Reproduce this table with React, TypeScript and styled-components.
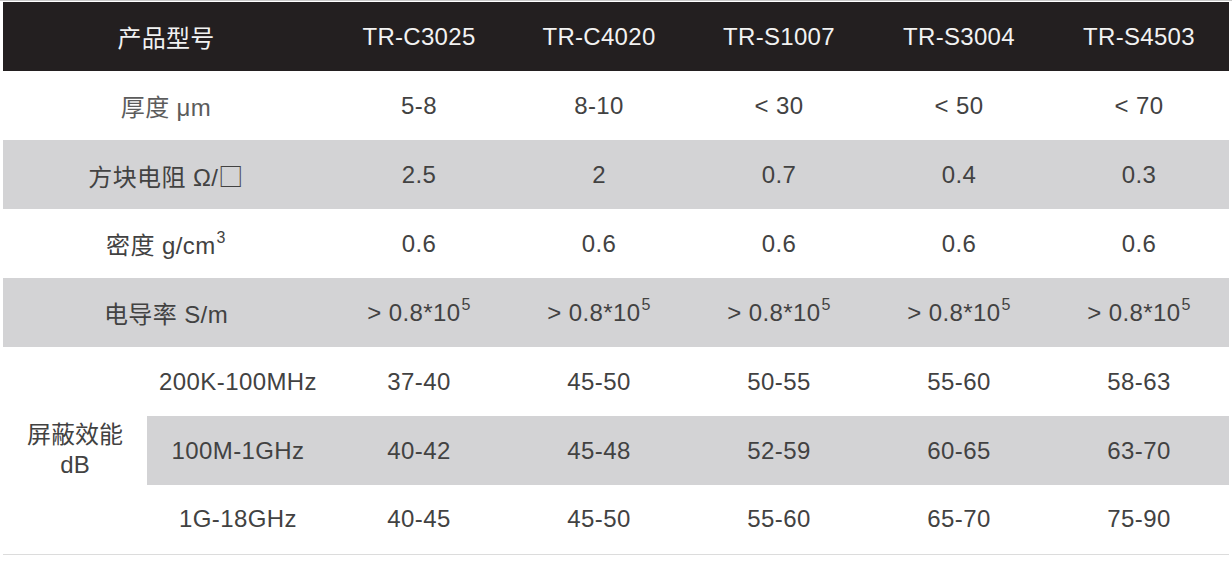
import React from 'react';
import styled, { createGlobalStyle } from 'styled-components';

const GlobalStyle = createGlobalStyle`
  html, body {
    margin: 0;
    padding: 0;
    background: #ffffff;
  }
  body {
    font-family: "Liberation Sans", "Noto Sans CJK SC", sans-serif;
  }
`;

const Page = styled.div`
  width: 1232px;
  height: 570px;
  padding: 1px 3px 0;
  box-sizing: border-box;
  border-top: 1px solid #c8c8c8;
  background: #ffffff;
`;

const SpecTable = styled.table`
  width: 1226px;
  table-layout: fixed;
  border-collapse: collapse;
  border-bottom: 1px solid #dcdcdc;
  font-size: 24px;
  color: #424242;
`;

const HeadRow = styled.tr`
  background: #231f20;
  height: 69px;
`;

const HeadCell = styled.th`
  color: #f2f2f2;
  font-weight: normal;
  text-align: center;
  vertical-align: middle;
  padding: 0;
  letter-spacing: 0.3px;
`;

const Row = styled.tr<{ $shade?: boolean }>`
  height: 69px;
  background: ${(p) => (p.$shade ? '#d3d3d5' : '#ffffff')};
`;

const Cell = styled.td<{ $muted?: boolean; $shade?: boolean }>`
  text-align: center;
  vertical-align: middle;
  padding: 0;
  color: ${(p) => (p.$muted ? '#5c5c5c' : '#424242')};
  background: ${(p) => (p.$shade ? '#d3d3d5' : 'transparent')};
  white-space: nowrap;
  letter-spacing: 0.4px;
`;

const GroupCell = styled.td`
  text-align: center;
  vertical-align: middle;
  padding: 0;
  background: #ffffff;
  line-height: 30px;
  color: #424242;
`;

const Sup = styled.sup`
  font-size: 16px;
  line-height: 0;
  position: relative;
  top: -2px;
  vertical-align: super;
  margin-left: 1px;
`;

const Square = styled.span`
  font-family: "Noto Sans CJK SC", sans-serif;
  font-size: 25px;
`;

const models = ['TR-C3025', 'TR-C4020', 'TR-S1007', 'TR-S3004', 'TR-S4503'];

type SpecRow = { label: React.ReactNode; values: React.ReactNode[]; shade?: boolean; muted?: boolean };

const conductivity = (
  <>
    &gt; 0.8*10<Sup>5</Sup>
  </>
);

const specRows: SpecRow[] = [
  { label: '厚度 μm', values: ['5-8', '8-10', '< 30', '< 50', '< 70'], muted: true },
  {
    label: (
      <>
        方块电阻 Ω/<Square>□</Square>
      </>
    ),
    values: ['2.5', '2', '0.7', '0.4', '0.3'],
    shade: true,
  },
  {
    label: (
      <>
        密度 g/cm<Sup>3</Sup>
      </>
    ),
    values: ['0.6', '0.6', '0.6', '0.6', '0.6'],
  },
  { label: '电导率 S/m', values: Array(5).fill(conductivity), shade: true },
];

const shielding = [
  { band: '200K-100MHz', values: ['37-40', '45-50', '50-55', '55-60', '58-63'] },
  { band: '100M-1GHz', values: ['40-42', '45-48', '52-59', '60-65', '63-70'], shade: true },
  { band: '1G-18GHz', values: ['40-45', '45-50', '55-60', '65-70', '75-90'] },
];

export default function App() {
  return (
    <Page>
      <GlobalStyle />
      <SpecTable>
        <colgroup>
          <col style={{ width: 144 }} />
          <col style={{ width: 182 }} />
          {models.map((m) => (
            <col key={m} style={{ width: 180 }} />
          ))}
        </colgroup>
        <thead>
          <HeadRow>
            <HeadCell colSpan={2}>产品型号</HeadCell>
            {models.map((m) => (
              <HeadCell key={m}>{m}</HeadCell>
            ))}
          </HeadRow>
        </thead>
        <tbody>
          {specRows.map((row, i) => (
            <Row key={i} $shade={row.shade}>
              <Cell colSpan={2} $muted={row.muted}>
                {row.label}
              </Cell>
              {row.values.map((v, j) => (
                <Cell key={j}>{v}</Cell>
              ))}
            </Row>
          ))}
          {shielding.map((row, i) => (
            <Row key={row.band}>
              {i === 0 && (
                <GroupCell rowSpan={3}>
                  屏蔽效能
                  <br />
                  dB
                </GroupCell>
              )}
              <Cell $shade={row.shade}>{row.band}</Cell>
              {row.values.map((v, j) => (
                <Cell key={j} $shade={row.shade}>
                  {v}
                </Cell>
              ))}
            </Row>
          ))}
        </tbody>
      </SpecTable>
    </Page>
  );
}
